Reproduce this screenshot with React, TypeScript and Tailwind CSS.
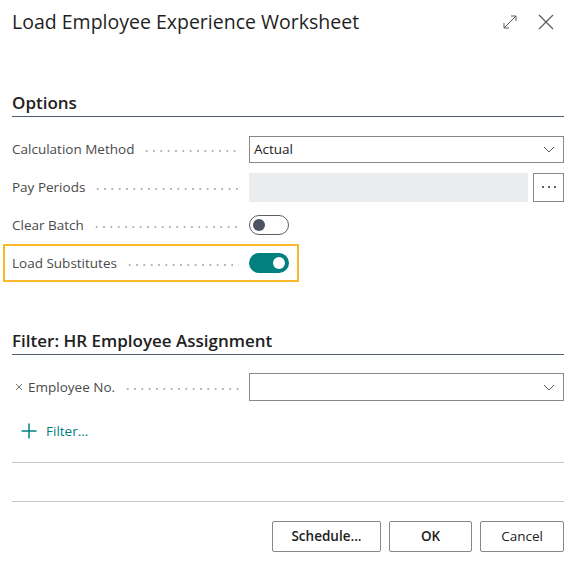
import type { ReactNode } from 'react'

const font = { fontFamily: '"Segoe UI", "Open Sans", sans-serif' }

function Chevron() {
  return (
    <svg width="12" height="12" viewBox="0 0 12 12" aria-hidden>
      <path d="M1 4 L6 9 L11 4" fill="none" stroke="#605e5c" strokeWidth="1" />
    </svg>
  )
}

/** Label + dotted leader, filling the left column of a field row. */
function Label({ children, lead }: { children: ReactNode; lead?: ReactNode }) {
  return (
    <div className="flex h-full w-[237px] shrink-0 items-center">
      {lead}
      <span className="whitespace-nowrap text-[13.5px] text-[#4a4a4a]">{children}</span>
      <span className="mr-[10px] ml-[9px] mt-[4px] h-[2px] flex-1 bg-[image:radial-gradient(circle,#b8b6b4_0.75px,transparent_1.2px)] bg-[length:7.33px_2px] bg-repeat-x" />
    </div>
  )
}

function Toggle({ on }: { on: boolean }) {
  return on ? (
    <div className="flex h-[20px] w-[40px] items-center justify-end rounded-full bg-[#00807f] pr-[4px]">
      <div className="h-[12px] w-[12px] rounded-full bg-white" />
    </div>
  ) : (
    <div className="flex h-[20px] w-[40px] items-center rounded-full border border-[#605e5c] pl-[3px]">
      <div className="h-[12px] w-[12px] rounded-full bg-[#4d5363]" />
    </div>
  )
}

function Heading({ children }: { children: ReactNode }) {
  return (
    <div className="h-[25px] border-b border-[#505c6d] pb-[3px] text-[17px] leading-[22px] font-semibold text-[#212121]">
      {children}
    </div>
  )
}

function Button({ children, bold, w }: { children: ReactNode; bold?: boolean; w: string }) {
  return (
    <button
      className={`${w} h-[31px] rounded-[2px] border border-[#8a8886] bg-white text-[13.5px] text-[#212121] ${bold ? 'font-semibold' : ''}`}
    >
      {children}
    </button>
  )
}

export default function App() {
  return (
    <div className="h-[562px] w-[576px] bg-white px-[12px]" style={font}>
      {/* title bar */}
      <div className="flex h-[46px] items-center justify-between pb-[2px]">
        <h1 className="text-[19.5px] font-normal text-[#1f1f1f]">Load Employee Experience Worksheet</h1>
        <div className="mr-[10px] flex items-center gap-[20px]">
          <svg width="16" height="16" viewBox="0 0 16 16" aria-hidden>
            <g fill="none" stroke="#605e5c" strokeWidth="1">
              <path d="M2 14 L14 2" />
              <path d="M9 2 H14 V7" />
              <path d="M2 9 V14 H7" />
            </g>
          </svg>
          <svg width="16" height="16" viewBox="0 0 16 16" aria-hidden>
            <g fill="none" stroke="#605e5c" strokeWidth="1.2">
              <path d="M1 1 L15 15" />
              <path d="M15 1 L1 15" />
            </g>
          </svg>
        </div>
      </div>

      {/* Options */}
      <div className="mt-[46px]">
        <Heading>Options</Heading>
      </div>
      <div className="mt-[13px] flex flex-col">
        <div className="flex h-[38px] items-center">
          <Label>Calculation Method</Label>
          <div className="flex h-[27px] flex-1 items-center justify-between border border-[#8a8886] pr-[8px] pl-[4px] text-[13.5px] text-[#212121]">
            <span>Actual</span>
            <Chevron />
          </div>
        </div>
        <div className="flex h-[38px] items-center">
          <Label>Pay Periods</Label>
          <div className="h-[29px] flex-1 bg-[#ebecee]" />
          <div className="ml-[5px] flex h-[29px] w-[31px] items-center justify-center gap-[4px] border border-[#8a8886]">
            <span className="h-[2px] w-[2px] rounded-full bg-[#323130]" />
            <span className="h-[2px] w-[2px] rounded-full bg-[#323130]" />
            <span className="h-[2px] w-[2px] rounded-full bg-[#323130]" />
          </div>
        </div>
        <div className="flex h-[38px] items-center">
          <Label>Clear Batch</Label>
          <Toggle on={false} />
        </div>
        <div className="-ml-[9px] flex h-[38px] w-[296px] items-center border-2 border-[#f9b92a] pl-[7px]">
          <Label>Load Substitutes</Label>
          <Toggle on />
        </div>
      </div>

      {/* Filter */}
      <div className="mt-[48px]">
        <Heading>Filter: HR Employee Assignment</Heading>
      </div>
      <div className="mt-[13px] flex h-[38px] items-center">
        <Label
          lead={
            <svg width="8" height="8" viewBox="0 0 8 8" className="mr-[5px] ml-[3px]" aria-hidden>
              <g stroke="#7a7876" strokeWidth="1">
                <path d="M1 1 L7 7" />
                <path d="M7 1 L1 7" />
              </g>
            </svg>
          }
        >
          Employee No.
        </Label>
        <div className="flex h-[28px] flex-1 items-center justify-end border border-[#8a8886] pr-[8px]">
          <Chevron />
        </div>
      </div>
      <div className="mt-[6px] flex h-[38px] items-center pl-[9px] text-[13.5px] text-[#00807f]">
        <svg width="16" height="16" viewBox="0 0 16 16" className="mr-[9px]" aria-hidden>
          <g stroke="#00807f" strokeWidth="1.5">
            <path d="M8 0.5 V15.5" />
            <path d="M0.5 8 H15.5" />
          </g>
        </svg>
        Filter...
      </div>
      <div className="mt-[12px] border-t border-[#c8c6c4]" />

      {/* footer */}
      <div className="mt-[38px] border-t border-[#c8c6c4]" />
      <div className="mt-[19px] flex justify-end gap-[8px]">
        <Button w="w-[109px]" bold>
          Schedule...
        </Button>
        <Button w="w-[83px]" bold>
          OK
        </Button>
        <Button w="w-[84px]">Cancel</Button>
      </div>
    </div>
  )
}
